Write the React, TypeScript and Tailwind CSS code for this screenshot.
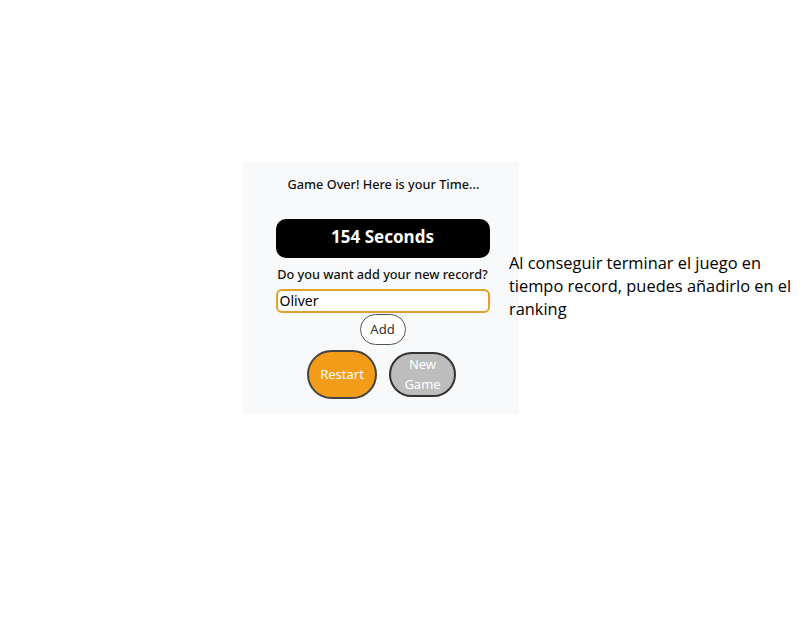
import React from "react";

export default function App() {
  return (
    <div className="w-[810px] h-[625px] bg-white relative" style={{ fontFamily: '"Noto Sans", "Open Sans", sans-serif' }}>
      <div className="flex flex-row items-start pt-[162px] pl-[243px]">
        <div className="w-[276px] h-[252px] bg-[#f8f9fa] flex flex-col items-center pt-[13px]">
          <div className="text-[12.7px] leading-[18px] font-medium text-[#111] ml-[5px]">Game Over! Here is your Time...</div>
          <div className="mt-[26px] w-[214px] h-[39px] bg-black rounded-[10px] flex items-center justify-center ml-[3px] pb-[4px]">
            <span className="text-white font-bold text-[17px] leading-none">154 Seconds</span>
          </div>
          <div className="mt-[7px] text-[12.7px] leading-[18px] font-medium text-[#111] ml-[3px]">Do you want add your new record?</div>
          <div className="mt-[6px] w-[214px] h-[24px] border-2 border-[#e0a02c] rounded-[6px] bg-white flex items-center pl-[2px] ml-[3px]">
            <span className="text-[14px] leading-none text-black">Oliver</span>
          </div>
          <div className="mt-[1px] w-[46px] h-[31px] rounded-full border border-[#555] bg-white flex items-center justify-center ml-[3px]">
            <span className="text-[13px] text-[#333]">Add</span>
          </div>
          <div className="mt-[5px] flex flex-row items-center gap-[12px] ml-[1px]">
            <div className="w-[70px] h-[49px] rounded-full bg-[#f39c19] border-2 border-[#444] flex items-center justify-center">
              <span className="text-white text-[13px]">Restart</span>
            </div>
            <div className="w-[67px] h-[45px] rounded-full bg-[#bdbdbd] border-2 border-[#333] flex items-center justify-center text-center pb-[2px]">
              <span className="text-white text-[13px] leading-[20px]">New<br />Game</span>
            </div>
          </div>
        </div>
        <div className="ml-[-10px] mt-[89px] w-[288px] text-[16.4px] leading-[23px] text-black" style={{ fontFamily: '"Open Sans", sans-serif' }}>
          Al conseguir terminar el juego en tiempo record, puedes añadirlo en el ranking
        </div>
      </div>
    </div>
  );
}
